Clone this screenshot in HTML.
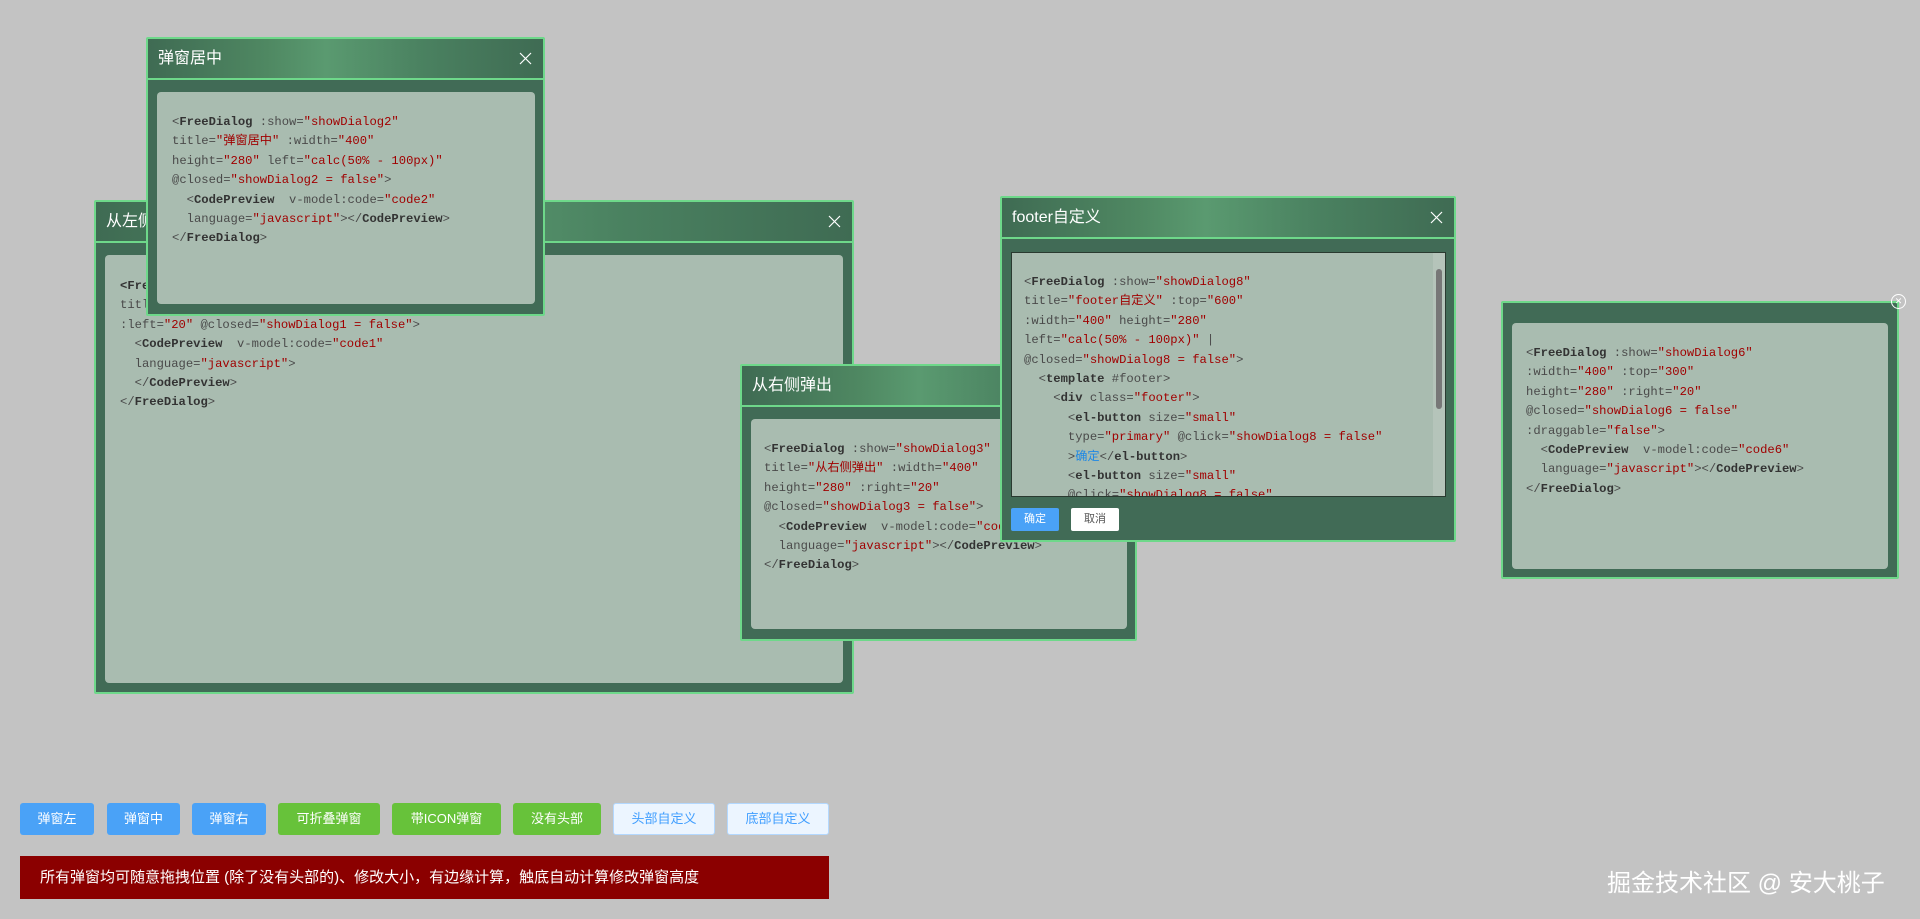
<!DOCTYPE html>
<html><head><meta charset="utf-8"><style>
*{box-sizing:border-box;margin:0;padding:0}
body{width:1920px;height:919px;background:#c3c3c3;position:relative;overflow:hidden;font-family:"Liberation Sans","Noto Sans CJK SC",sans-serif}
.dlg{position:absolute;border:2px solid #6ed88a;background:#416b56;border-radius:2px}
.hd{height:41px;border-bottom:2px solid #6ed88a;background:linear-gradient(90deg,#3f6b53 0%,#4f8862 30%,#5a9a70 45%,#4a8160 70%,#3f6b53 100%);color:#fff;font-size:16px;line-height:39px;padding-left:10px;position:relative}
.x{position:absolute;right:11px;top:13px;width:13px;height:13px}
.pn{position:absolute;background:#a9bcb0;border-radius:4px}
pre{position:absolute;font-family:"Liberation Mono","Noto Sans CJK SC",monospace;font-size:12.2px;line-height:19.4px;color:#4a4a4a}
b{color:#333}
.s{color:#a00000}
.btn{position:absolute;top:803px;height:32px;border-radius:3px;color:#fff;font-size:13px;text-align:center;line-height:32px}
.bl{background:#4aa2f7}.gr{background:#67c23a}.wt{background:#ecf5ff;border:1px solid #b3d8ff;color:#409eff;line-height:30px}
</style></head><body>

<div class="dlg" style="left:94px;top:200px;width:760px;height:494px">
<div class="hd">从左侧弹出<svg class="x" viewBox="0 0 13 13"><path d="M1 1L12 12M12 1L1 12" stroke="#fff" stroke-width="1.2"/></svg></div>
<div class="pn" style="left:9px;top:53px;width:738px;height:428px"></div>
<pre style="left:24px;top:75px"><b>&lt;FreeDialog</b> :show=<span class="s">"showDialog1"</span>
title=<span class="s">"从左侧弹出"</span> :width=<span class="s">"400"</span> height=<span class="s">"280"</span>
:left=<span class="s">"20"</span> @closed=<span class="s">"showDialog1 = false"</span>&gt;
  &lt;<b>CodePreview</b>  v-model:code=<span class="s">"code1"</span>
  language=<span class="s">"javascript"</span>&gt;
  &lt;/<b>CodePreview</b>&gt;
&lt;/<b>FreeDialog</b>&gt;</pre>
</div>

<div class="dlg" style="left:146px;top:37px;width:399px;height:279px">
<div class="hd">弹窗居中<svg class="x" viewBox="0 0 13 13"><path d="M1 1L12 12M12 1L1 12" stroke="#fff" stroke-width="1.2"/></svg></div>
<div class="pn" style="left:9px;top:53px;width:378px;height:212px"></div>
<pre style="left:24px;top:74px">&lt;<b>FreeDialog</b> :show=<span class="s">"showDialog2"</span>
title=<span class="s">"弹窗居中"</span> :width=<span class="s">"400"</span>
height=<span class="s">"280"</span> left=<span class="s">"calc(50% - 100px)"</span>
@closed=<span class="s">"showDialog2 = false"</span>&gt;
  &lt;<b>CodePreview</b>  v-model:code=<span class="s">"code2"</span>
  language=<span class="s">"javascript"</span>&gt;&lt;/<b>CodePreview</b>&gt;
&lt;/<b>FreeDialog</b>&gt;</pre>
</div>

<div class="dlg" style="left:740px;top:364px;width:397px;height:277px">
<div class="hd">从右侧弹出<svg class="x" viewBox="0 0 13 13"><path d="M1 1L12 12M12 1L1 12" stroke="#fff" stroke-width="1.2"/></svg></div>
<div class="pn" style="left:9px;top:53px;width:376px;height:210px"></div>
<pre style="left:22px;top:74px">&lt;<b>FreeDialog</b> :show=<span class="s">"showDialog3"</span>
title=<span class="s">"从右侧弹出"</span> :width=<span class="s">"400"</span>
height=<span class="s">"280"</span> :right=<span class="s">"20"</span>
@closed=<span class="s">"showDialog3 = false"</span>&gt;
  &lt;<b>CodePreview</b>  v-model:code=<span class="s">"code3"</span>
  language=<span class="s">"javascript"</span>&gt;&lt;/<b>CodePreview</b>&gt;
&lt;/<b>FreeDialog</b>&gt;</pre>
</div>

<div class="dlg" style="left:1000px;top:196px;width:456px;height:346px">
<div class="hd">footer自定义<svg class="x" viewBox="0 0 13 13"><path d="M1 1L12 12M12 1L1 12" stroke="#fff" stroke-width="1.2"/></svg></div>
<div style="position:absolute;left:9px;top:54px;width:435px;height:245px;background:#a9bcb0;border:1px solid #2a3a30;overflow:hidden">
<pre style="left:12px;top:20px">&lt;<b>FreeDialog</b> :show=<span class="s">"showDialog8"</span>
title=<span class="s">"footer自定义"</span> :top=<span class="s">"600"</span>
:width=<span class="s">"400"</span> height=<span class="s">"280"</span>
left=<span class="s">"calc(50% - 100px)"</span> |
@closed=<span class="s">"showDialog8 = false"</span>&gt;
  &lt;<b>template</b> #footer&gt;
    &lt;<b>div</b> class=<span class="s">"footer"</span>&gt;
      &lt;<b>el-button</b> size=<span class="s">"small"</span>
      type=<span class="s">"primary"</span> @click=<span class="s">"showDialog8 = false"</span>
      &gt;<span style="color:#1e88e5">确定</span>&lt;/<b>el-button</b>&gt;
      &lt;<b>el-button</b> size=<span class="s">"small"</span>
      @click=<span class="s">"showDialog8 = false"</span></pre>
<div style="position:absolute;right:0;top:0;width:12px;height:100%;background:#b5c4ba"></div>
<div style="position:absolute;right:3px;top:16px;width:6px;height:140px;background:#777;border-radius:3px"></div>
</div>
<div style="position:absolute;left:9px;top:310px;width:48px;height:23px;background:#4aa2f7;border-radius:2px;color:#fff;font-size:11px;text-align:center;line-height:23px">确定</div>
<div style="position:absolute;left:69px;top:310px;width:48px;height:23px;background:#fff;border-radius:2px;color:#555;font-size:11px;text-align:center;line-height:23px">取消</div>
</div>

<div class="dlg" style="left:1501px;top:301px;width:398px;height:278px">
<div class="pn" style="left:9px;top:20px;width:376px;height:246px"></div>
<pre style="left:23px;top:41px">&lt;<b>FreeDialog</b> :show=<span class="s">"showDialog6"</span>
:width=<span class="s">"400"</span> :top=<span class="s">"300"</span>
height=<span class="s">"280"</span> :right=<span class="s">"20"</span>
@closed=<span class="s">"showDialog6 = false"</span>
:draggable=<span class="s">"false"</span>&gt;
  &lt;<b>CodePreview</b>  v-model:code=<span class="s">"code6"</span>
  language=<span class="s">"javascript"</span>&gt;&lt;/<b>CodePreview</b>&gt;
&lt;/<b>FreeDialog</b>&gt;</pre>
<div style="position:absolute;right:-9px;top:-9px;width:15px;height:15px;border:1.5px solid #fff;border-radius:50%;color:#fff;font-size:9px;line-height:12px;text-align:center">✕</div>
</div>

<div class="btn bl" style="left:20px;width:74px">弹窗左</div>
<div class="btn bl" style="left:107px;width:73px">弹窗中</div>
<div class="btn bl" style="left:192px;width:74px">弹窗右</div>
<div class="btn gr" style="left:278px;width:102px">可折叠弹窗</div>
<div class="btn gr" style="left:392px;width:109px">带ICON弹窗</div>
<div class="btn gr" style="left:513px;width:88px">没有头部</div>
<div class="btn wt" style="left:613px;width:102px">头部自定义</div>
<div class="btn wt" style="left:727px;width:102px">底部自定义</div>

<div style="position:absolute;left:20px;top:856px;width:809px;height:43px;background:#8b0000;color:#fff;font-size:15px;line-height:43px;padding-left:20px">所有弹窗均可随意拖拽位置 (除了没有头部的)、修改大小，有边缘计算，触底自动计算修改弹窗高度</div>

<div style="position:absolute;left:1607px;top:863px;color:#fff;font-size:24px;white-space:nowrap">掘金技术社区 @ 安大桃子</div>
</body></html>
